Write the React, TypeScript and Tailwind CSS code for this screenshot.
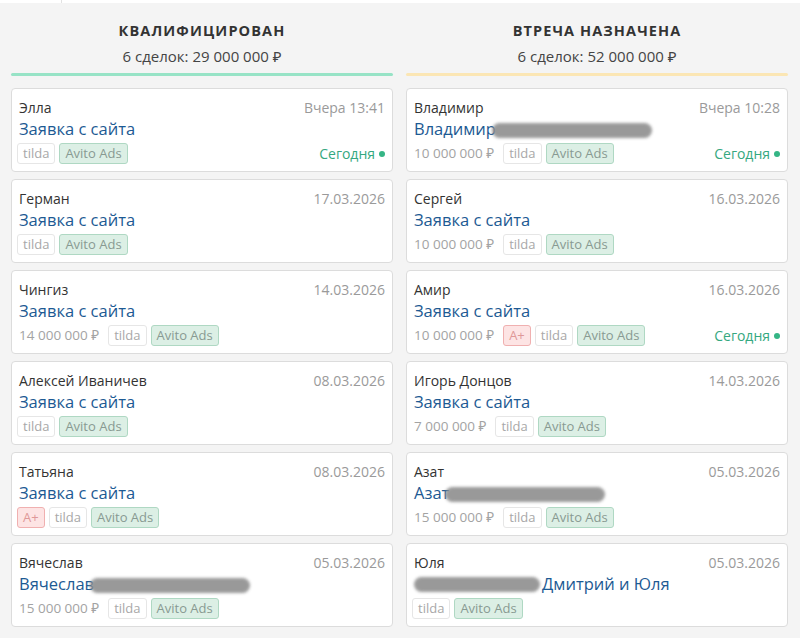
import React from "react";

type Deal = {
  name: string;
  date: string;
  title: string;
  blur?: "after" | "before";
  price?: string;
  aplus?: boolean;
  today?: boolean;
};

const qualified: Deal[] = [
  { name: "Элла", date: "Вчера 13:41", title: "Заявка с сайта", today: true },
  { name: "Герман", date: "17.03.2026", title: "Заявка с сайта" },
  { name: "Чингиз", date: "14.03.2026", title: "Заявка с сайта", price: "14 000 000 ₽" },
  { name: "Алексей Иваничев", date: "08.03.2026", title: "Заявка с сайта" },
  { name: "Татьяна", date: "08.03.2026", title: "Заявка с сайта", aplus: true },
  { name: "Вячеслав", date: "05.03.2026", title: "Вячеслав", blur: "after", price: "15 000 000 ₽" },
];

const meeting: Deal[] = [
  { name: "Владимир", date: "Вчера 10:28", title: "Владимир", blur: "after", price: "10 000 000 ₽", today: true },
  { name: "Сергей", date: "16.03.2026", title: "Заявка с сайта", price: "10 000 000 ₽" },
  { name: "Амир", date: "16.03.2026", title: "Заявка с сайта", price: "10 000 000 ₽", aplus: true, today: true },
  { name: "Игорь Донцов", date: "14.03.2026", title: "Заявка с сайта", price: "7 000 000 ₽" },
  { name: "Азат", date: "05.03.2026", title: "Азат", blur: "after", price: "15 000 000 ₽" },
  { name: "Юля", date: "05.03.2026", title: "Дмитрий и Юля", blur: "before" },
];

const Smudge = ({ className }: { className: string }) => (
  <span className={`inline-block h-[15px] rounded-full bg-[#8f8f8f] opacity-90 blur-[1.5px] align-middle ${className}`} />
);

const Tag = ({ children, kind }: { children: React.ReactNode; kind: "plain" | "avito" | "aplus" }) => {
  const styles = {
    plain: "bg-white border-[#e6e6e6] text-[#a8a8a8]",
    avito: "bg-[#dcefe5] border-[#afd8c3] text-[#889a92]",
    aplus: "bg-[#fde4e4] border-[#f0b0b0] text-[#df9898]",
  }[kind];
  return (
    <span className={`inline-flex h-[21px] items-center rounded-[3px] border px-[5px] text-[13px] leading-none ${styles}`}>
      {children}
    </span>
  );
};

const Card = ({ deal }: { deal: Deal }) => (
  <div className="h-[84px] rounded-[4px] border border-[#dcdcdc] bg-white pl-[5px] pr-[7px] pt-[9px]">
    <div className="flex h-[20px] items-center justify-between pl-[2px] text-[14px] leading-[20px]">
      <span className="text-[#333]">{deal.name}</span>
      <span className="text-[#9a9a9a]">{deal.date}</span>
    </div>
    <div className="flex h-[22px] items-center whitespace-nowrap pl-[2px] text-[16.5px] leading-[22px] text-[#1d5a93]">
      {deal.blur === "before" && <Smudge className="mr-[2px] w-[126px]" />}
      <span>{deal.title}</span>
      {deal.blur === "after" && <Smudge className="-ml-[4px] mt-[2px] w-[160px]" />}
    </div>
    <div className="mt-[3px] flex h-[21px] items-center gap-[4px]">
      {deal.price && <span className="ml-[2px] mr-[5px] text-[13.5px] text-[#a3a3a3]">{deal.price}</span>}
      {deal.aplus && <Tag kind="aplus">A+</Tag>}
      <Tag kind="plain">tilda</Tag>
      <Tag kind="avito">Avito Ads</Tag>
      {deal.today && (
        <span className="ml-auto flex items-center gap-[4px] text-[14px] text-[#35a880]">
          Сегодня
          <span className="h-[6px] w-[6px] rounded-full bg-[#35b585]" />
        </span>
      )}
    </div>
  </div>
);

const Column = ({ title, summary, line, deals }: { title: string; summary: string; line: string; deals: Deal[] }) => (
  <div className="flex w-[382px] flex-col">
    <div className="flex h-[70px] flex-col items-center pt-[18px]">
      <div className="text-[14.5px] font-bold leading-[20px] tracking-[1.1px] text-[#333]">{title}</div>
      <div className="mt-[5px] text-[15px] leading-[20px] text-[#444]">{summary}</div>
    </div>
    <div className={`h-[3px] rounded-full ${line}`} />
    <div className="mt-[12px] flex flex-col gap-[7px]">
      {deals.map((d, i) => (
        <Card key={i} deal={d} />
      ))}
    </div>
  </div>
);

export default function App() {
  return (
    <div className="h-[638px] w-[800px] overflow-hidden bg-[#f4f4f4]" style={{ fontFamily: '"Open Sans", "Noto Sans", sans-serif' }}>
      <div className="flex h-[3px] bg-white">
        <div className="w-[62px] border-r border-[#e2e2e2]" />
      </div>
      <div className="flex gap-[13px] pl-[11px]">
        <Column title="КВАЛИФИЦИРОВАН" summary="6 сделок: 29 000 000 ₽" line="bg-[#97e3c6]" deals={qualified} />
        <Column title="ВТРЕЧА НАЗНАЧЕНА" summary="6 сделок: 52 000 000 ₽" line="bg-[#fbe6b4]" deals={meeting} />
      </div>
    </div>
  );
}
